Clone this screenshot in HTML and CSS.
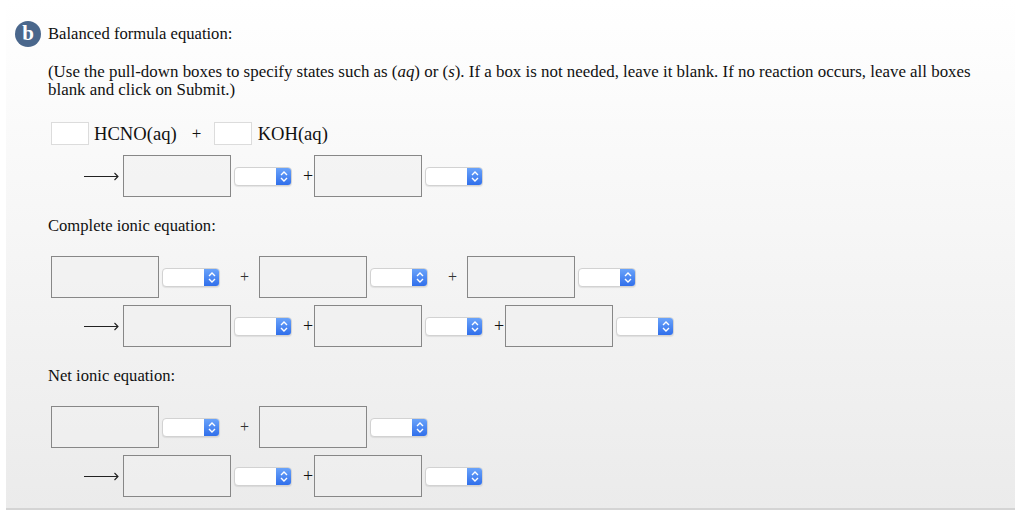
FILE: index.html
```html
<!DOCTYPE html>
<html lang="en">
<head>
    <meta charset="UTF-8">
    <title>Balanced formula equation</title>
    <link rel="stylesheet" href="styles.css">
</head>
<body>
    <div class="panel">
        <div class="part-header">
            <span class="badge">b</span>
            <span class="heading">Balanced formula equation:</span>
        </div>

        <div class="content">
            <p class="note">(Use the pull-down boxes to specify states such as (<i>aq</i>) or (<i>s</i>). If a box is not needed, leave it blank. If no reaction occurs, leave all boxes blank and click on Submit.)</p>

            <!-- Balanced formula equation -->
            <div class="eq-row first">
                <span class="coef"></span>
                <span class="formula">HCNO(aq)</span>
                <span class="plus-given">+</span>
                <span class="coef"></span>
                <span class="formula koh">KOH(aq)</span>
            </div>
            <div class="eq-row products">
                <svg class="arrow" width="35" height="10" viewBox="0 0 35 10"><path d="M0 5.5H34M30.5 2L34 5.5L30.5 9" fill="none" stroke="#222" stroke-width="1.1"/></svg>
                <span class="box"></span>
                <span class="state"><span class="state-btn"><svg width="16" height="17" viewBox="0 0 16 17"><path d="M5 7L8 4L11 7M5 10L8 13L11 10" fill="none" stroke="#fff" stroke-width="1.4"/></svg></span></span>
                <span class="plus">+</span>
                <span class="box"></span>
                <span class="state"><span class="state-btn"><svg width="16" height="17" viewBox="0 0 16 17"><path d="M5 7L8 4L11 7M5 10L8 13L11 10" fill="none" stroke="#fff" stroke-width="1.4"/></svg></span></span>
            </div>

            <!-- Complete ionic equation -->
            <div class="label">Complete ionic equation:</div>
            <div class="eq-row reactants">
                <span class="box"></span>
                <span class="state"><span class="state-btn"><svg width="16" height="17" viewBox="0 0 16 17"><path d="M5 7L8 4L11 7M5 10L8 13L11 10" fill="none" stroke="#fff" stroke-width="1.4"/></svg></span></span>
                <span class="plus-wide">+</span>
                <span class="box"></span>
                <span class="state"><span class="state-btn"><svg width="16" height="17" viewBox="0 0 16 17"><path d="M5 7L8 4L11 7M5 10L8 13L11 10" fill="none" stroke="#fff" stroke-width="1.4"/></svg></span></span>
                <span class="plus-wide">+</span>
                <span class="box"></span>
                <span class="state"><span class="state-btn"><svg width="16" height="17" viewBox="0 0 16 17"><path d="M5 7L8 4L11 7M5 10L8 13L11 10" fill="none" stroke="#fff" stroke-width="1.4"/></svg></span></span>
            </div>
            <div class="eq-row products">
                <svg class="arrow" width="35" height="10" viewBox="0 0 35 10"><path d="M0 5.5H34M30.5 2L34 5.5L30.5 9" fill="none" stroke="#222" stroke-width="1.1"/></svg>
                <span class="box"></span>
                <span class="state"><span class="state-btn"><svg width="16" height="17" viewBox="0 0 16 17"><path d="M5 7L8 4L11 7M5 10L8 13L11 10" fill="none" stroke="#fff" stroke-width="1.4"/></svg></span></span>
                <span class="plus">+</span>
                <span class="box"></span>
                <span class="state"><span class="state-btn"><svg width="16" height="17" viewBox="0 0 16 17"><path d="M5 7L8 4L11 7M5 10L8 13L11 10" fill="none" stroke="#fff" stroke-width="1.4"/></svg></span></span>
                <span class="plus">+</span>
                <span class="box"></span>
                <span class="state"><span class="state-btn"><svg width="16" height="17" viewBox="0 0 16 17"><path d="M5 7L8 4L11 7M5 10L8 13L11 10" fill="none" stroke="#fff" stroke-width="1.4"/></svg></span></span>
            </div>

            <!-- Net ionic equation -->
            <div class="label">Net ionic equation:</div>
            <div class="eq-row reactants">
                <span class="box"></span>
                <span class="state"><span class="state-btn"><svg width="16" height="17" viewBox="0 0 16 17"><path d="M5 7L8 4L11 7M5 10L8 13L11 10" fill="none" stroke="#fff" stroke-width="1.4"/></svg></span></span>
                <span class="plus-wide">+</span>
                <span class="box"></span>
                <span class="state"><span class="state-btn"><svg width="16" height="17" viewBox="0 0 16 17"><path d="M5 7L8 4L11 7M5 10L8 13L11 10" fill="none" stroke="#fff" stroke-width="1.4"/></svg></span></span>
            </div>
            <div class="eq-row products">
                <svg class="arrow" width="35" height="10" viewBox="0 0 35 10"><path d="M0 5.5H34M30.5 2L34 5.5L30.5 9" fill="none" stroke="#222" stroke-width="1.1"/></svg>
                <span class="box"></span>
                <span class="state"><span class="state-btn"><svg width="16" height="17" viewBox="0 0 16 17"><path d="M5 7L8 4L11 7M5 10L8 13L11 10" fill="none" stroke="#fff" stroke-width="1.4"/></svg></span></span>
                <span class="plus">+</span>
                <span class="box"></span>
                <span class="state"><span class="state-btn"><svg width="16" height="17" viewBox="0 0 16 17"><path d="M5 7L8 4L11 7M5 10L8 13L11 10" fill="none" stroke="#fff" stroke-width="1.4"/></svg></span></span>
            </div>
        </div>
    </div>
</body>
</html>
```

FILE: styles.css
```css
* {
    margin: 0;
    padding: 0;
    box-sizing: border-box;
}

body {
    background-color: #fff;
    font-family: 'Liberation Serif', 'Times New Roman', serif;
    font-size: 16.6px;
    color: #111;
}

.panel {
    margin-left: 6px;
    width: 1009px;
    padding: 21px 15px 11px 9px;
    background: linear-gradient(to bottom, #ffffff, #ebebeb);
    border-bottom: 2px solid #d4d4d4;
}

.part-header {
    display: flex;
    align-items: center;
    height: 26px;
}

.badge {
    width: 26px;
    height: 26px;
    border-radius: 50%;
    background-color: #4a678c;
    color: #fff;
    font-weight: bold;
    font-size: 21px;
    line-height: 25px;
    text-align: center;
}

.heading {
    margin-left: 7px;
    line-height: 18px;
}

.content {
    margin-left: 33px;
}

.note {
    margin-top: 16px;
    font-size: 16.9px;
    line-height: 18px;
}

.label {
    margin-top: 20px;
    line-height: 18px;
}

.eq-row {
    display: flex;
    align-items: center;
    margin-left: 3px;
}

.eq-row.first {
    margin-top: 23px;
    height: 23px;
}

.eq-row.first + .products {
    margin-top: 10px;
}

.label + .reactants {
    margin-top: 21px;
}

.reactants + .products {
    margin-top: 7px;
}

.coef {
    width: 38px;
    height: 23px;
    background-color: #fff;
    border: 1px solid #dcdcdc;
}

.formula {
    margin-left: 5px;
    font-size: 18.6px;
    line-height: 20px;
}

.formula.koh {
    margin-left: 6px;
}

.plus-given {
    width: 10px;
    margin: 0 12px 0 15px;
    font-size: 17px;
    text-align: center;
}

.arrow {
    margin-left: 33px;
    margin-right: 4px;
    flex-shrink: 0;
}

.box {
    width: 108px;
    height: 42px;
    border: 1px solid #878787;
    background-color: rgba(240, 240, 240, 0.6);
}

.state {
    display: flex;
    justify-content: flex-end;
    width: 58px;
    height: 19px;
    margin-left: 3px;
    background-color: #fff;
    border: 1px solid #d2d2d2;
    border-radius: 4px;
    box-shadow: 0 1px 1px rgba(0, 0, 0, 0.08);
    overflow: hidden;
}

.state-btn {
    display: flex;
    align-items: center;
    justify-content: center;
    width: 16px;
    margin: -1px -1px -1px 0;
    background: linear-gradient(to bottom, #6da6fb, #2d6cea);
    border-radius: 0 4px 4px 0;
}

.plus {
    width: 9px;
    margin: 0 2px 0 11px;
    font-size: 18px;
    line-height: 18px;
    text-align: center;
}

.plus-wide {
    width: 9px;
    margin: 0 10px 0 20px;
    font-size: 16px;
    line-height: 18px;
    text-align: center;
    color: #333;
}
```
